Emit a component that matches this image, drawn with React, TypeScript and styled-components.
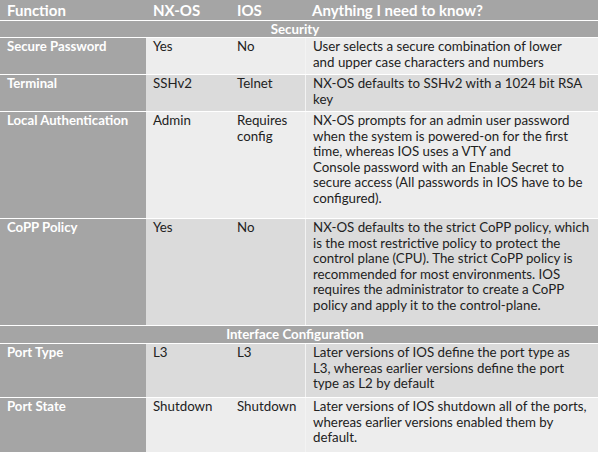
import React from "react";
import styled, { createGlobalStyle } from "styled-components";

const Global = createGlobalStyle`
  html, body { margin: 0; padding: 0; background: #ffffff; }
  body { font-family: "Lato", "Open Sans", sans-serif; }
`;

const Table = styled.div`
  width: 598px;
  display: flex;
  flex-direction: column;
  gap: 1px;
  background: #ffffff;
`;

const GRAY = "#a5a5a5";

const Row = styled.div<{ $h: number; $dark?: boolean }>`
  display: grid;
  grid-template-columns: 146px 84px 75px 1fr;
  height: ${(p) => p.$h}px;
  background: ${(p) => (p.$dark ? "#dbdbdb" : "#ededed")};
`;

const HeaderRow = styled.div`
  display: grid;
  grid-template-columns: 146px 84px 75px 1fr;
  height: 20px;
  background: ${GRAY};
`;

const HeadCell = styled.div`
  padding: 0 7px;
  color: #ffffff;
  font-weight: 700;
  font-size: 15px;
  line-height: 20px;
  white-space: nowrap;
`;

const SectionRow = styled.div<{ $h: number }>`
  height: ${(p) => p.$h}px;
  background: ${GRAY};
  color: #ffffff;
  font-weight: 700;
  font-size: 13.3px;
  line-height: ${(p) => p.$h}px;
  text-align: center;
  padding-right: 8px;
`;

const NameCell = styled.div`
  background: ${GRAY};
  color: #ffffff;
  font-weight: 700;
  font-size: 13.2px;
  line-height: 15.5px;
  padding: 1px 7px 0;
  white-space: nowrap;
`;

const Cell = styled.div<{ $sep?: boolean }>`
  color: #222222;
  font-size: 13.3px;
  line-height: 15.5px;
  padding: 1px 7px 0;
  white-space: nowrap;
  border-left: ${(p) => (p.$sep ? "1px solid #f3f3f3" : "none")};
`;

type Item = {
  name: string;
  nx: string[];
  ios: string[];
  note: string[];
  h: number;
  dark?: boolean;
};

const Lines = ({ lines }: { lines: string[] }) => (
  <>
    {lines.map((l, i) => (
      <React.Fragment key={i}>
        {i > 0 && <br />}
        {l}
      </React.Fragment>
    ))}
  </>
);

const security: Item[] = [
  {
    name: "Secure Password",
    nx: ["Yes"],
    ios: ["No"],
    note: ["User selects a secure combination of lower", "and upper case characters and numbers"],
    h: 36,
  },
  {
    name: "Terminal",
    nx: ["SSHv2"],
    ios: ["Telnet"],
    note: ["NX-OS defaults to SSHv2 with a 1024 bit RSA", "key"],
    h: 36,
    dark: true,
  },
  {
    name: "Local Authentication",
    nx: ["Admin"],
    ios: ["Requires", "config"],
    note: [
      "NX-OS prompts for an admin user password",
      "when the system is powered-on for the first",
      "time, whereas IOS uses a VTY and",
      "Console password with an Enable Secret to",
      "secure access (All passwords in IOS have to be",
      "configured).",
    ],
    h: 106,
  },
  {
    name: "CoPP Policy",
    nx: ["Yes"],
    ios: ["No"],
    note: [
      "NX-OS defaults to the strict CoPP policy, which",
      "is the most restrictive policy to protect the",
      "control plane (CPU). The strict CoPP policy is",
      "recommended for most environments. IOS",
      "requires the administrator to create a CoPP",
      "policy and apply it to the control-plane.",
    ],
    h: 106,
    dark: true,
  },
];

const iface: Item[] = [
  {
    name: "Port Type",
    nx: ["L3"],
    ios: ["L3"],
    note: [
      "Later versions of IOS define the port type as",
      "L3, whereas earlier versions define the port",
      "type as L2 by default",
    ],
    h: 53,
    dark: true,
  },
  {
    name: "Port State",
    nx: ["Shutdown"],
    ios: ["Shutdown"],
    note: [
      "Later versions of IOS shutdown all of the ports,",
      "whereas earlier versions enabled them by",
      "default.",
    ],
    h: 54,
  },
];

const DataRow = ({ item }: { item: Item }) => (
  <Row $h={item.h} $dark={item.dark}>
    <NameCell>{item.name}</NameCell>
    <Cell>
      <Lines lines={item.nx} />
    </Cell>
    <Cell>
      <Lines lines={item.ios} />
    </Cell>
    <Cell $sep>
      <Lines lines={item.note} />
    </Cell>
  </Row>
);

export default function App() {
  return (
    <>
      <Global />
      <Table>
        <HeaderRow>
          <HeadCell>Function</HeadCell>
          <HeadCell>NX-OS</HeadCell>
          <HeadCell>IOS</HeadCell>
          <HeadCell>Anything I need to know?</HeadCell>
        </HeaderRow>
        <SectionRow $h={16}>Security</SectionRow>
        {security.map((it) => (
          <DataRow key={it.name} item={it} />
        ))}
        <SectionRow $h={17}>Interface Configuration</SectionRow>
        {iface.map((it) => (
          <DataRow key={it.name} item={it} />
        ))}
      </Table>
    </>
  );
}
